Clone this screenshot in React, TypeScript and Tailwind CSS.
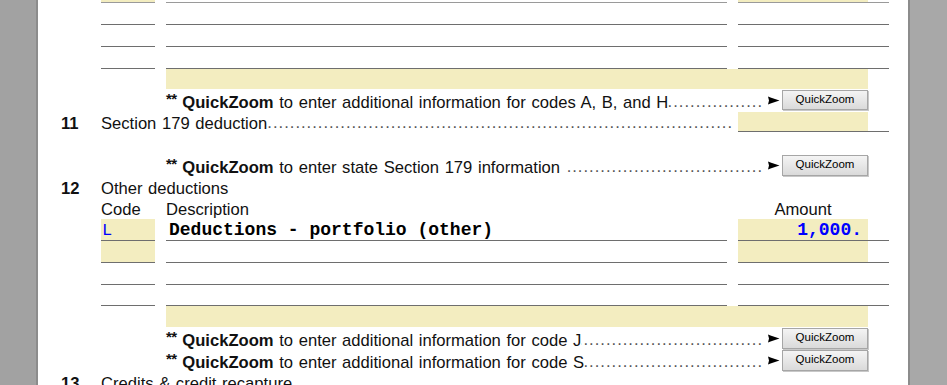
import React from "react";

const Y = "bg-[#f3edc0]";
const LINE = "border-b border-[#6e6e6e]";
const SANS = "font-['Liberation_Sans',Arial,sans-serif]";
const MONO = "font-['Liberation_Mono','Courier_New',monospace]";

const DOTS = ".".repeat(200);

function Leader({ gap }: { gap?: boolean }) {
  return (
    <div className={`flex-1 min-w-0 overflow-hidden flex justify-end self-end mb-[4px] ${gap ? "ml-[6px]" : ""}`}>
      <span className="whitespace-nowrap tracking-[1px] leading-[14px] text-[#555]">{DOTS}</span>
    </div>
  );
}

function Arrow() {
  return (
    <svg width="12" height="9" viewBox="0 0 12 9" className="shrink-0">
      <path d="M0 0.5 L2.5 1.5 L11.5 4.5 L2.5 7.5 L0 8.5 L1 4.5 Z" fill="#000" />
    </svg>
  );
}

function QZButton({ h = 20 }: { h?: number }) {
  return (
    <div
      className={`w-[86px] ${h === 21 ? "h-[21px]" : "h-[20px]"} shrink-0 border border-[#a6a6a6] bg-[linear-gradient(#f4f4f4,#dadada)] shadow-[1px_1px_0_#c8c8c8] flex items-center justify-center text-[11.5px] text-black ${SANS}`}
    >
      QuickZoom
    </div>
  );
}

function QZRow({ text, h = "h-[22px]", bh = 20, gap }: { text: string; h?: string; bh?: number; gap?: boolean }) {
  return (
    <div className={`flex shrink-0 ${h} items-center`}>
      <div className="w-[128px] shrink-0" />
      <div className="w-[702px] flex items-center h-full">
        <div className="flex items-end flex-1 min-w-0 h-full relative top-[2px]">
          <span className="whitespace-nowrap leading-[20px] [word-spacing:1px]">
            <span className="text-[15px] font-bold relative top-[-4px] tracking-[-0.5px]">**</span>{" "}
            <b>QuickZoom</b> {text}
          </span>
          <Leader gap={gap} />
        </div>
        <div className="w-[5px]" />
        <Arrow />
        <div className="w-[2px]" />
        <QZButton h={bh} />
      </div>
    </div>
  );
}

function GridRow({
  h,
  code,
  desc,
  amt,
  codeY,
  descY,
  amtY,
  line = true,
  lineColor,
}: {
  h: string;
  code?: React.ReactNode;
  desc?: React.ReactNode;
  amt?: React.ReactNode;
  codeY?: boolean;
  descY?: boolean;
  amtY?: boolean;
  line?: boolean;
  lineColor?: string;
}) {
  const ln = line ? `border-b ${lineColor ?? "border-[#6e6e6e]"}` : "";
  return (
    <div className={`flex shrink-0 ${h}`}>
      <div className="w-[63px] shrink-0" />
      <div className={`w-[54px] shrink-0 ${ln} ${codeY ? Y : ""} flex items-end`}>{code}</div>
      <div className="w-[11px] shrink-0" />
      <div className={`w-[561px] shrink-0 ${ln} ${descY ? Y : ""} flex items-end`}>{desc}</div>
      <div className="w-[11px] shrink-0" />
      <div className={`w-[151px] shrink-0 ${ln} flex`}>
        <div className={`w-[130px] ${amtY ? Y : ""} flex items-end justify-end pr-[6px]`}>{amt}</div>
      </div>
    </div>
  );
}

function YellowBar({ h }: { h: string }) {
  return (
    <div className={`flex shrink-0 ${h}`}>
      <div className="w-[128px] shrink-0" />
      <div className={`w-[702px] ${Y}`} />
    </div>
  );
}

export default function App() {
  return (
    <div className={`w-[947px] h-[385px] overflow-hidden flex bg-white text-[16.6px] text-[#111] ${SANS}`}>
      <div className="w-[38px] shrink-0 bg-[#a2a2a2] border-r-2 border-[#8c8c8c]" />
      <div className="w-[870px] shrink-0 flex flex-col">
        {/* partial top row */}
        <GridRow h="h-[3px]" codeY amtY lineColor="border-[#9a9a9a]" />
        <GridRow h="h-[22px]" />
        <GridRow h="h-[22px]" />
        <GridRow h="h-[22px]" />
        <YellowBar h="h-[20px]" />
        <QZRow text="to enter additional information for codes A, B, and H" />
        {/* 11 */}
        <div className="flex shrink-0 h-[21px]">
          <div className="w-[63px] shrink-0 pl-[23px] font-bold leading-[21px] relative top-[2px]">11</div>
          <div className="w-[632px] shrink-0 flex items-end relative top-[2px]">
            <span className="whitespace-nowrap leading-[20px] [word-spacing:1px]">Section 179 deduction</span>
            <Leader />
          </div>
          <div className="w-[5px] shrink-0" />
          <div className={`w-[151px] shrink-0 ${LINE} flex pt-[1px]`}>
            <div className={`w-[130px] ${Y}`} />
          </div>
        </div>
        <div className="h-[22px] shrink-0" />
        <QZRow text="to enter state Section 179 information" h="h-[22px]" bh={21} gap />
        {/* 12 */}
        <div className="flex shrink-0 h-[22px] items-center relative top-[2px]">
          <div className="w-[63px] shrink-0 pl-[23px] font-bold">12</div>
          <div className="[word-spacing:1px]">Other deductions</div>
        </div>
        <div className="flex shrink-0 h-[21px] items-center relative top-[2px]">
          <div className="w-[63px] shrink-0" />
          <div className="w-[65px] shrink-0">Code</div>
          <div className="w-[572px] shrink-0">Description</div>
          <div className="w-[130px] shrink-0 text-center">Amount</div>
        </div>
        <GridRow
          h="h-[22px]"
          codeY
          amtY
          code={<span className={`${MONO} text-[17px] text-[#0000ff] pl-[1px] leading-[21px] relative top-[1px]`}>L</span>}
          desc={
            <span className={`${MONO} text-[18px] font-bold text-black pl-[3px] leading-[21px] whitespace-nowrap relative top-[1px]`}>
              Deductions - portfolio (other)
            </span>
          }
          amt={<span className={`${MONO} text-[18px] font-bold text-[#0000ff] leading-[21px] relative top-[1px]`}>1,000.</span>}
        />
        <GridRow h="h-[22px]" codeY amtY />
        <GridRow h="h-[22px]" />
        <GridRow h="h-[21px]" />
        <YellowBar h="h-[21px]" />
        <QZRow text="to enter additional information for code J" bh={21} />
        <QZRow text="to enter additional information for code S" bh={21} />
        <div className="flex shrink-0 h-[22px] items-center relative top-[2px]">
          <div className="w-[63px] shrink-0 pl-[23px] font-bold">13</div>
          <div className="[word-spacing:1px]">Credits &amp; credit recapture</div>
        </div>
      </div>
      <div className="flex-1 bg-[#a8a8a8] border-l-2 border-[#8c8c8c]" />
    </div>
  );
}
